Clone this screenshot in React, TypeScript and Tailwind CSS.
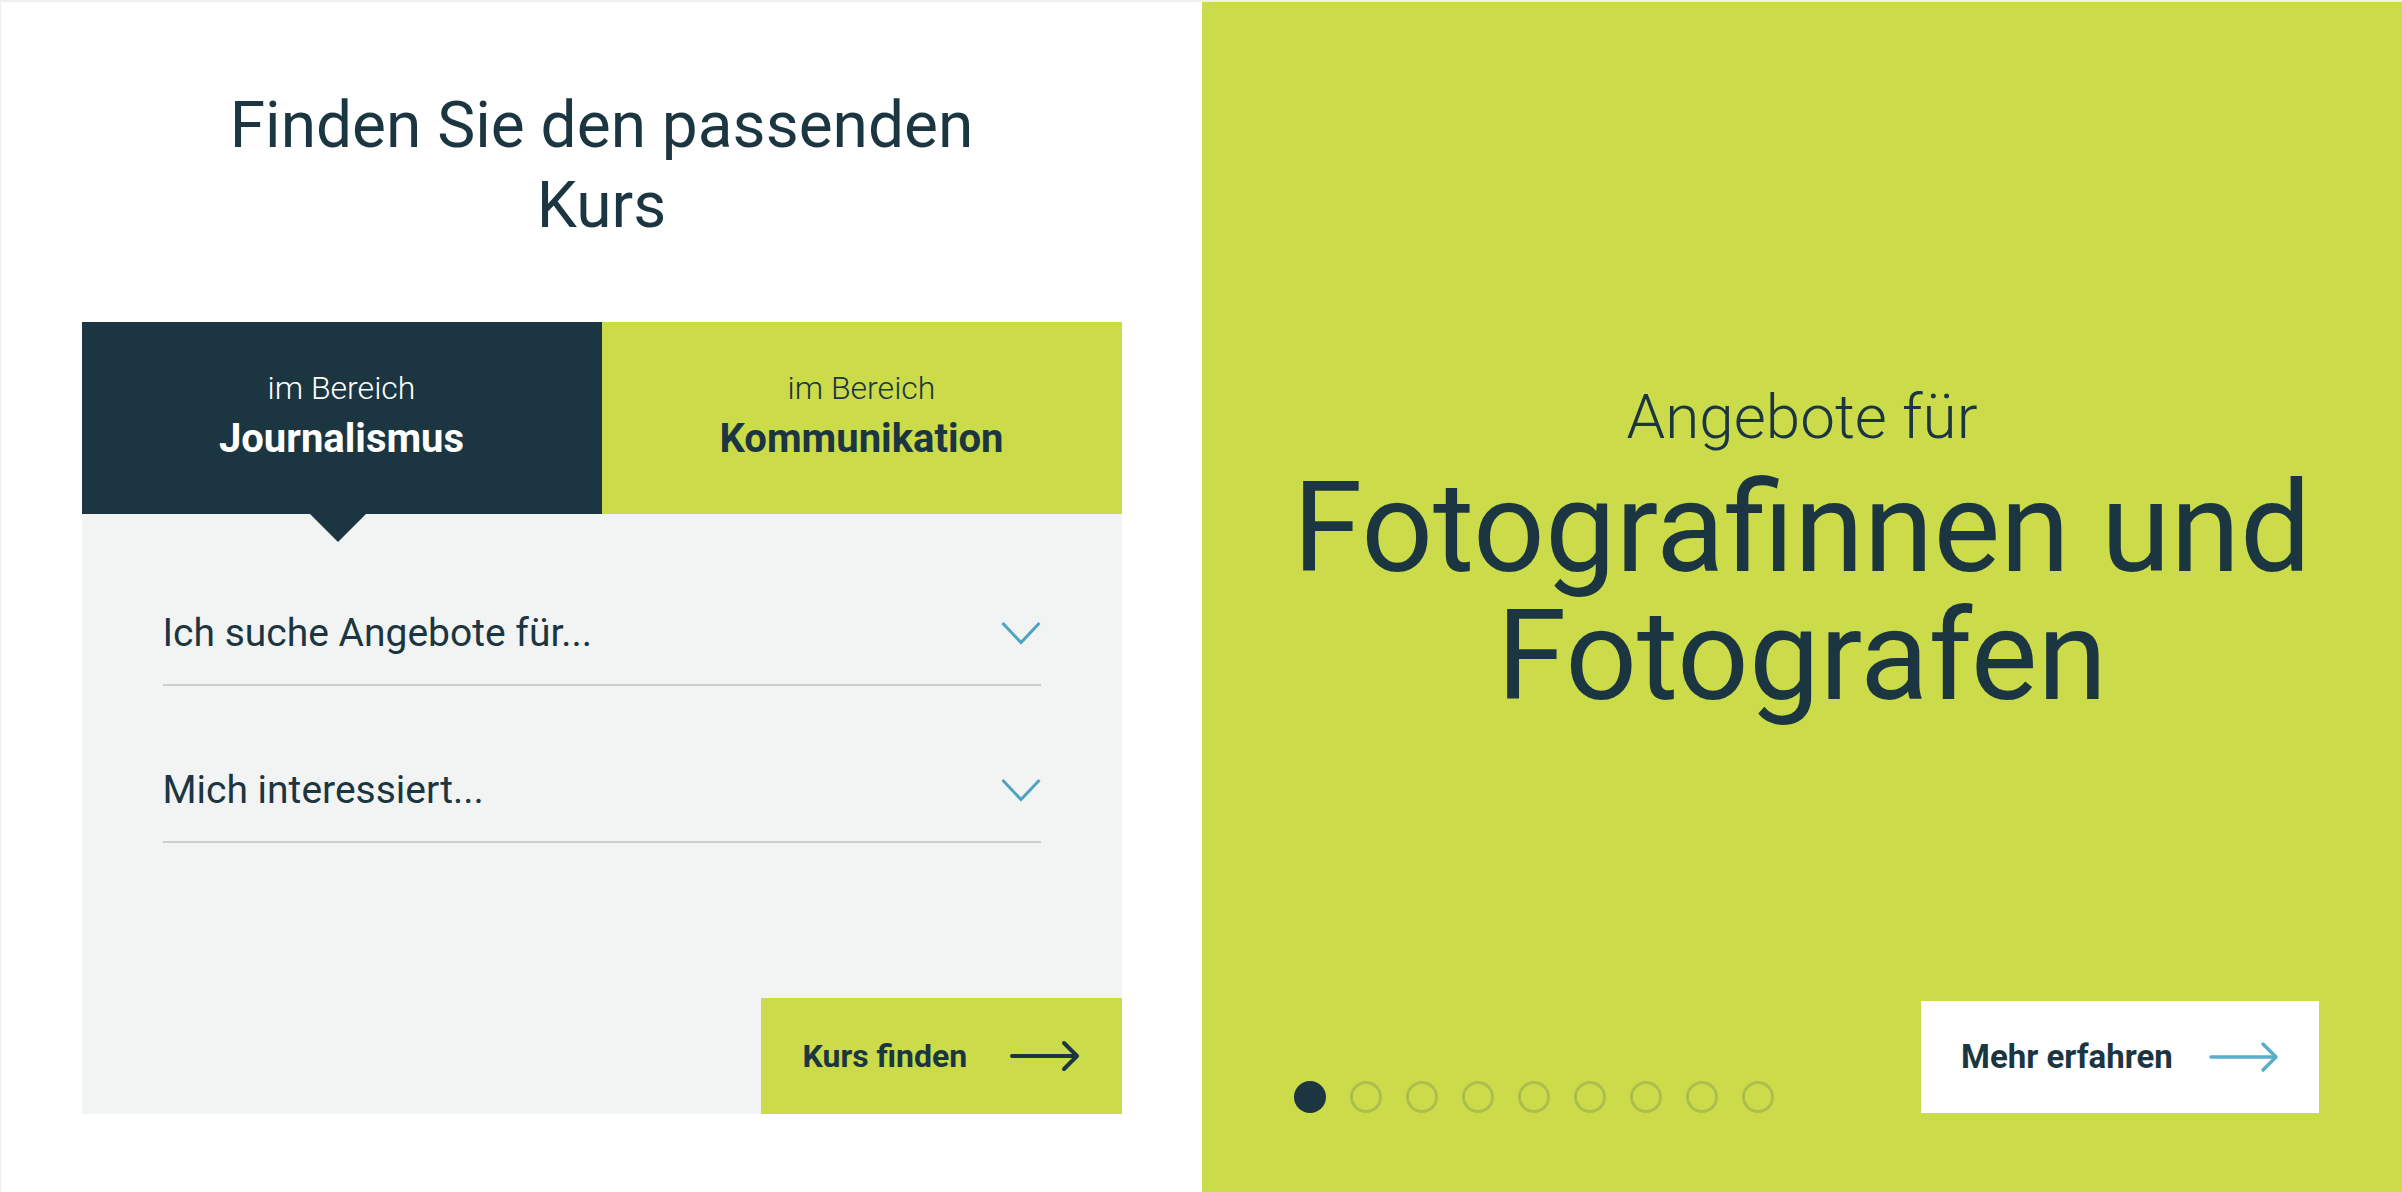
const ink = "text-[#1b3641]";

function Arrow({ color, width = 4 }: { color: string; width?: number }) {
  return (
    <svg width="70" height="32" viewBox="0 0 70 32" fill="none" stroke={color} strokeWidth={width} strokeLinecap="round" strokeLinejoin="round">
      <path d="M2 16 H66" />
      <path d="M54 3 L67 16 L54 29" />
    </svg>
  );
}

function Chevron() {
  return (
    <svg width="40" height="24" viewBox="0 0 40 24" fill="none" stroke="#4ea3c1" strokeWidth="3">
      <path d="M1.5 2 L20 21.5 L38.5 2" />
    </svg>
  );
}

function SelectField({ label }: { label: string }) {
  return (
    <div className="flex items-center justify-between border-b-2 border-[#c9ced0] pb-[27px]">
      <span className={`text-[39px] leading-[48px] ${ink}`}>{label}</span>
      <Chevron />
    </div>
  );
}

export default function App() {
  const dots = Array.from({ length: 9 }, (_, i) => i);

  return (
    <div className="flex h-[1192px] w-[2402px] border-t-2 border-l border-[#efefef] bg-white font-['Roboto',sans-serif]">
      <div className="flex w-[1201px] flex-col items-center">
        <h2 className={`mt-[84px] text-center text-[64px] font-normal leading-[80px] ${ink}`}>
          Finden Sie den passenden
          <br />
          Kurs
        </h2>

        <div className="mt-[76px] w-[1040px]">
          <div className="relative grid h-[192px] grid-cols-2">
            <div className="flex flex-col items-center bg-[#1b3641] pt-[47px] text-white">
              <span className="text-[32px] font-light leading-[38px]">im Bereich</span>
              <span className="mt-[9px] text-[40px] font-bold leading-[46px]">Journalismus</span>
            </div>
            <div className={`flex flex-col items-center bg-[#cbdb4a] pt-[47px] ${ink}`}>
              <span className="text-[32px] font-light leading-[38px]">im Bereich</span>
              <span className="mt-[9px] text-[40px] font-bold leading-[46px]">Kommunikation</span>
            </div>
            <div className="absolute top-[192px] left-[228px] h-0 w-0 border-x-[28px] border-t-[28px] border-x-transparent border-t-[#1b3641]" />
          </div>

          <div className="flex h-[600px] flex-col bg-[#f2f4f3]">
            <div className="flex flex-col gap-[80px] px-[81px] pt-[95px]">
              <SelectField label="Ich suche Angebote für..." />
              <SelectField label="Mich interessiert..." />
            </div>
            <div className="mt-auto flex justify-end">
              <button className={`flex h-[116px] w-[361px] items-center justify-between bg-[#cbdb4a] px-[42px] text-[32px] font-bold ${ink}`}>
                <span>Kurs finden</span>
                <Arrow color="#1b3641" />
              </button>
            </div>
          </div>
        </div>
      </div>

      <div className={`flex w-[1200px] flex-col items-center bg-[#cbdb4a] ${ink}`}>
        <p className="mt-[379px] text-[62px] font-light leading-[72px]">Angebote für</p>
        <h1 className="mt-[11px] text-center text-[126px] font-normal leading-[128px]">
          Fotografinnen und
          <br />
          Fotografen
        </h1>

        <div className="mt-auto flex w-full items-end justify-between pr-[83px] pb-[79px] pl-[92px]">
          <div className="flex gap-[24px]">
            {dots.map((i) => (
              <span
                key={i}
                className={
                  i === 0
                    ? "h-[32px] w-[32px] rounded-full bg-[#1b3641]"
                    : "h-[32px] w-[32px] rounded-full border-[3px] border-[#abbe4e]"
                }
              />
            ))}
          </div>
          <button className="flex h-[112px] w-[398px] items-center justify-between bg-white px-[40px] text-[33px] font-bold">
            <span>Mehr erfahren</span>
            <Arrow color="#5aaecb" width={3.5} />
          </button>
        </div>
      </div>
    </div>
  );
}
